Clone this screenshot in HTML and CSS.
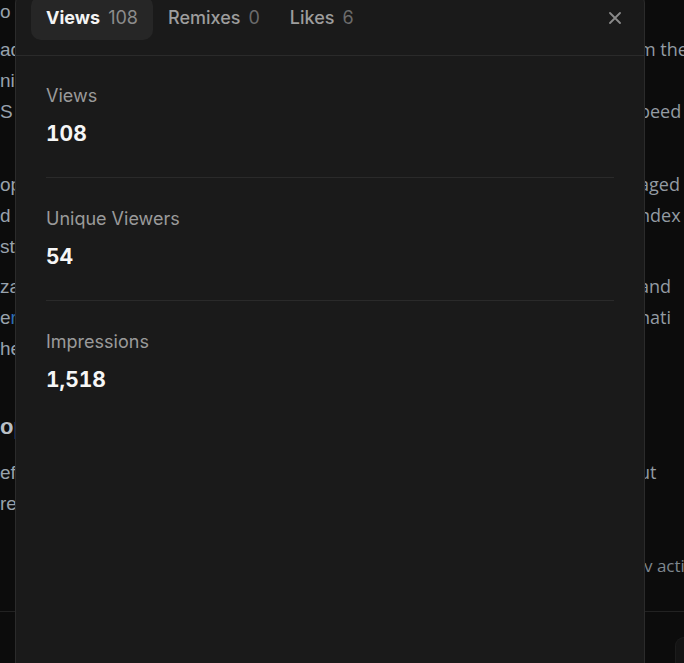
FILE: index.html
```html
<!DOCTYPE html>
<html lang="en">
<head>
<meta charset="utf-8">
<title>Stats</title>
<link rel="stylesheet" href="styles.css">
</head>
<body>
<div class="page">
  <div class="article">
    <div class="para p0">
      <div class="row"><span class="l">o <span class="link">t</span></span><span class="r"></span></div>
    </div>
    <div class="para p1">
      <div class="row"><span class="l">ad</span><span class="r">m thei</span></div>
      <div class="row"><span class="l">ni</span><span class="r"></span></div>
      <div class="row"><span class="l">S f</span><span class="r">peed</span></div>
    </div>
    <div class="para p2">
      <div class="row"><span class="l">op</span><span class="r">aged</span></div>
      <div class="row"><span class="l">d <span class="link">a</span></span><span class="r">ndex</span></div>
      <div class="row"><span class="l">st</span><span class="r"></span></div>
    </div>
    <div class="para p3">
      <div class="row"><span class="l">za</span><span class="r"> and</span></div>
      <div class="row"><span class="l">e<span class="link">r</span></span><span class="r">nati</span></div>
      <div class="row"><span class="l">he</span><span class="r"></span></div>
    </div>
    <div class="para heading">
      <div class="row"><span class="l">op</span><span class="r"></span></div>
    </div>
    <div class="para p4">
      <div class="row"><span class="l">ef</span><span class="r">ut</span></div>
      <div class="row"><span class="l">re</span><span class="r"></span></div>
    </div>
    <div class="para small">
      <div class="row"><span class="l"></span><span class="r">v acti</span></div>
    </div>
  </div>
  <div class="footer"><div class="footer-btn"></div></div>
</div>

<div class="overlay">
  <div class="modal">
    <div class="modal-header">
      <div class="tabs">
        <div class="tab active"><span class="tab-name">Views</span><span class="tab-count">108</span></div>
        <div class="tab"><span class="tab-name">Remixes</span><span class="tab-count">0</span></div>
        <div class="tab"><span class="tab-name">Likes</span><span class="tab-count">6</span></div>
      </div>
      <button class="close" aria-label="Close">
        <svg width="12" height="12" viewBox="0 0 12 12"><path d="M1 1L11 11M11 1L1 11" stroke="currentColor" stroke-width="1.8" stroke-linecap="round"/></svg>
      </button>
    </div>
    <div class="stats">
      <div class="stat">
        <div class="stat-label">Views</div>
        <div class="stat-value">108</div>
      </div>
      <div class="stat">
        <div class="stat-label">Unique Viewers</div>
        <div class="stat-value">54</div>
      </div>
      <div class="stat">
        <div class="stat-label">Impressions</div>
        <div class="stat-value">1,518</div>
      </div>
    </div>
  </div>
</div>
</body>
</html>
```

FILE: styles.css
```css
* { box-sizing: border-box; }
html, body {
  margin: 0;
  padding: 0;
  background: #0c0c0c;
  overflow: hidden;
  height: 100%;
}
body {
  font-family: Inter, "Liberation Sans", sans-serif;
}

/* page behind the modal */
.page {
  height: 663px;
  display: flex;
  flex-direction: column;
}
.article {
  flex: 1;
  margin-top: -4px;
}
.row {
  display: grid;
  grid-template-columns: 639px 1fr;
  line-height: 31px;
  height: 31px;
  white-space: nowrap;
}
.row .l {
  font-family: "Liberation Sans", Arial, sans-serif;
  font-size: 19px;
  color: #98a2ac;
  overflow: hidden;
}
.row .r {
  font-family: "Open Sans", sans-serif;
  font-size: 18px;
  color: #939ba3;
  overflow: hidden;
}
.link { color: #2e6db4; }
.p1 { margin-top: 7px; }
.p2 { margin-top: 42px; }
.p3 { margin-top: 9px; }
.heading { margin-top: 47px; }
.heading .l { font-weight: bold; font-size: 22px; color: #b9bfc5; }
.p4 { margin-top: 15px; }
.small { margin-top: 35px; }
.small .row { line-height: 24px; height: 24px; }
.small .r { font-size: 17px; color: #7f878f; padding-left: 5px; }
.footer {
  height: 52px;
  border-top: 1px solid #222;
  display: flex;
  justify-content: flex-end;
  align-items: flex-end;
}
.footer-btn {
  width: 9px;
  height: 26px;
  background: #141414;
  border-top-left-radius: 10px;
  border: 1px solid #1c1c1c;
  border-right: none;
  border-bottom: none;
}

/* modal */
.overlay {
  position: fixed;
  inset: 0;
}
.modal {
  position: absolute;
  left: 15px;
  top: -13px;
  width: 630px;
  height: 720px;
  background: #1a1a1a;
  border: 1px solid #2b2b2b;
  border-radius: 16px;
}
.modal-header {
  display: flex;
  align-items: flex-start;
  padding: 8px 15px 15px 15px;
  border-bottom: 1px solid #2a2a2a;
}
.tabs {
  display: flex;
}
.tab {
  height: 44px;
  padding: 0 15px 2px 15px;
  display: flex;
  align-items: center;
  gap: 8px;
  font-size: 18px;
  border-radius: 10px;
}
.tab-name {
  color: #9d9d9d;
  font-weight: 500;
}
.tab-count {
  color: #6b6b6b;
}
.tab.active {
  background: #262626;
}
.tab.active .tab-name {
  color: #f4f4f4;
  font-weight: 700;
}
.tab.active .tab-count {
  color: #8c8c8c;
}
.close {
  margin-left: auto;
  margin-top: 10px;
  margin-right: 2px;
  width: 24px;
  height: 24px;
  padding: 0;
  border: none;
  background: transparent;
  color: #8a8a8a;
  display: flex;
  align-items: center;
  justify-content: center;
}

.stats {
  padding: 0 30px;
}
.stat {
  padding: 28px 0 29px 0;
}
.stat + .stat {
  border-top: 1px solid #2a2a2a;
  padding-top: 29px;
}
.stat-label {
  font-size: 18px;
  line-height: 24px;
  color: #9a9a9a;
}
.stat-value {
  margin-top: 12px;
  font-size: 21px;
  line-height: 28px;
  font-weight: 700;
  color: #f6f6f6;
  font-variant-numeric: tabular-nums;
}
```
